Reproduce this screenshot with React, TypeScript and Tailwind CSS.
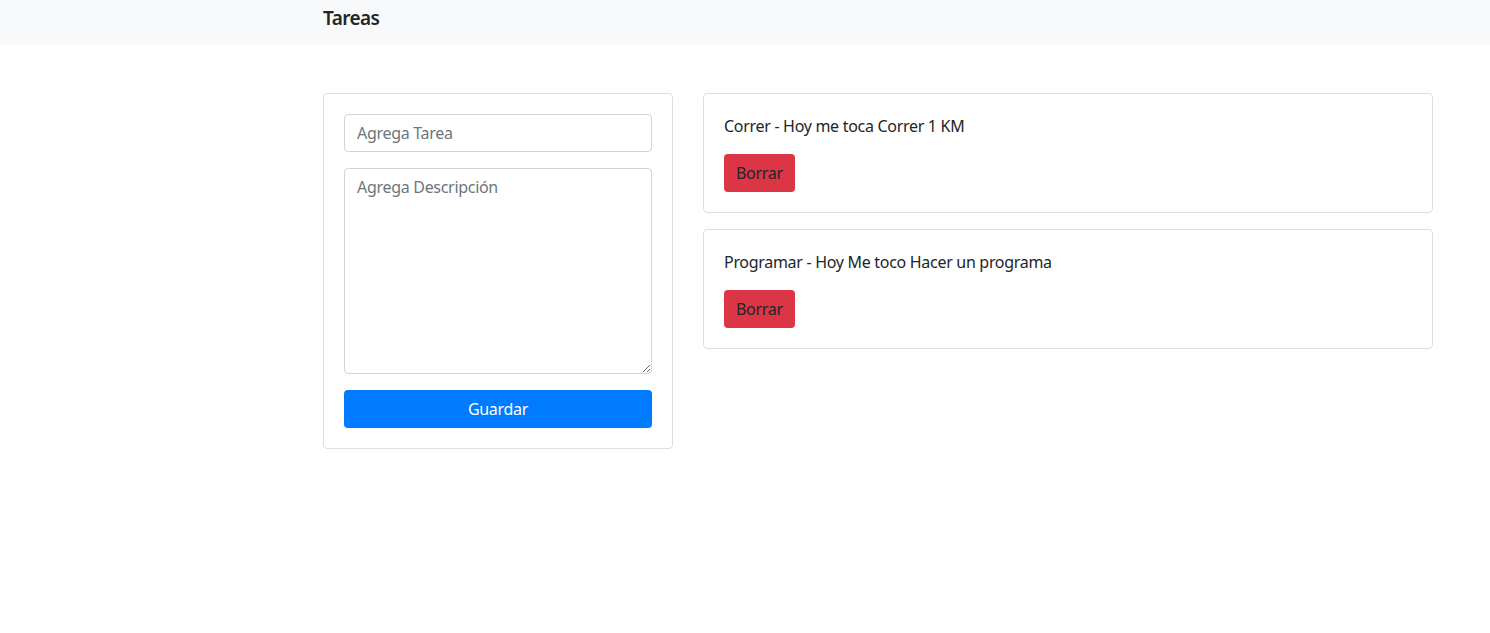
import React from "react";

const tasks = [
  { title: "Correr", desc: "Hoy me toca Correr 1 KM" },
  { title: "Programar", desc: "Hoy Me toco Hacer un programa" },
];

export default function App() {
  return (
    <div
      className="min-h-[633px] bg-white text-[#212529] text-[16px] leading-[24px] tracking-[-0.3px]"
      style={{ fontFamily: '"Segoe UI", "Noto Sans", "Open Sans", sans-serif' }}
    >
      <nav className="h-[45px] bg-[#f8f9fa] flex items-start pt-[3px] pl-[323px]">
        <span className="text-[19px] leading-[30px] font-semibold tracking-[-0.6px] text-[#212529]">Tareas</span>
      </nav>
      <div className="pl-[323px] pt-[48px] flex gap-[30px]">
        <div className="w-[350px] shrink-0 self-start border border-[rgba(0,0,0,0.125)] rounded-[4px] p-[20px]">
          <input
            className="block w-full h-[38px] px-[12px] py-[6px] border border-[#ced4da] rounded-[4px] placeholder:text-[#6c757d] outline-none"
            placeholder="Agrega Tarea"
          />
          <textarea
            className="block w-full h-[206px] mt-[16px] px-[12px] py-[6px] border border-[#ced4da] rounded-[4px] placeholder:text-[#6c757d] outline-none"
            placeholder="Agrega Descripción"
          />
          <button className="block w-full h-[38px] mt-[16px] bg-[#007bff] text-white rounded-[4px]">
            Guardar
          </button>
        </div>
        <div className="w-[730px] shrink-0 flex flex-col gap-[16px]">
          {tasks.map((t) => (
            <div key={t.title} className="border border-[rgba(0,0,0,0.125)] rounded-[4px] p-[20px]">
              <p className="mb-[16px]">
                {t.title} - {t.desc}
              </p>
              <button className="h-[38px] px-[12px] bg-[#dc3545] text-[#212529] rounded-[4px]">
                Borrar
              </button>
            </div>
          ))}
        </div>
      </div>
    </div>
  );
}
